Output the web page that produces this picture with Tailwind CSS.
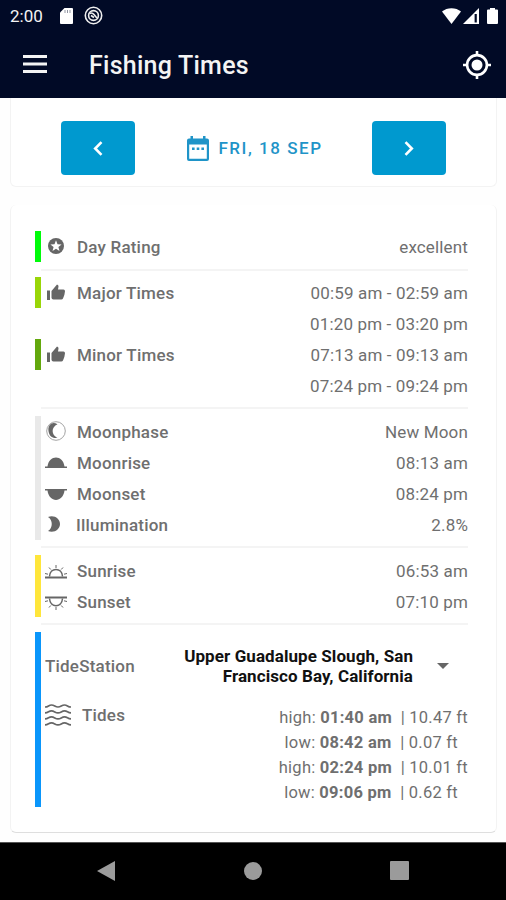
<!DOCTYPE html>
<html lang="en">
<head>
    <meta charset="UTF-8">
    <meta name="viewport" content="width=device-width, initial-scale=1.0">
    <title>Fishing Times</title>
    <script src="https://cdn.jsdelivr.net/npm/@tailwindcss/browser@4"></script>
</head>
<body class="bg-[#fefefe] font-[Roboto,sans-serif] text-[#6f6f6f]">
    <div class="w-[506px] h-[900px] flex flex-col overflow-hidden">
        <!-- Status bar + app bar -->
        <header class="h-[98px] shrink-0 bg-[#010a26] text-[#f4f4f4]">
            <div class="h-8 flex items-center pl-[10px] pr-[8px]">
                <span class="text-[17px] w-[50px] pt-px">2:00</span>
                <svg class="w-[13px] h-4" viewBox="0 0 13 16" fill="#fff"><path d="M4.5 0H12q1 0 1 1v14q0 1-1 1H1q-1 0-1-1V4.500z"/><path d="M5 2v3M7.500 2v3M10 2v3" stroke="#9296a3"/></svg>
                <svg class="w-[19px] h-[19px] ml-[11px] -mt-px" viewBox="0 0 19 19" fill="none" stroke="#eee"><circle cx="9.500" cy="9.500" r="8.200" stroke-width="1.600"/><circle cx="9.500" cy="9.500" r="4.900" stroke-width="1.600"/><path d="M5.500 7.500c3-1.500 4 .5 7.500 4.500M7 9.500l3 2" stroke-width="1.600"/></svg>
                <svg class="w-[19px] h-4 ml-auto -mt-px" viewBox="0 0 19 16" fill="#fff"><path d="M0 3.500C5-1 14-1 19 3.500L9.500 16z"/></svg>
                <svg class="w-4 h-4 ml-[2px] -mt-px" viewBox="0 0 16 16"><path d="M16 0v16H0z" fill="#fff"/><path d="M12.700 6v8.500" stroke="#010a26" stroke-width="2.200"/></svg>
                <svg class="w-[11px] h-4 ml-2 -mt-px" viewBox="0 0 11 16" fill="#fff"><path d="M3 0h5v1.500h2q1 0 1 1V15q0 1-1 1H1q-1 0-1-1V2.500q0-1 1-1h2z"/></svg>
            </div>
            <div class="h-[66px] flex items-center pl-[23px] pr-[15px]">
                <svg class="w-6 h-[18px] -mt-[2px]" viewBox="0 0 24 18" fill="#f4f4f4"><path d="M0 0h24v3H0zM0 7.500h24v3H0zM0 15h24v3H0z"/></svg>
                <h1 class="ml-[42px] pt-[2px] text-[25px] font-medium tracking-[0.25px]">Fishing Times</h1>
                <svg class="w-7 h-7 ml-auto -mt-px" viewBox="0 0 28 28" fill="none" stroke="#fff"><circle cx="14" cy="14" r="9.900" stroke-width="2.600"/><circle cx="14" cy="14" r="5.500" fill="#fff" stroke="none"/><path d="M14 0v4M14 24v4M0 14h4M24 14h4" stroke-width="2.600"/></svg>
            </div>
        </header>

        <main class="flex-1 px-[10px]">
            <!-- Date picker -->
            <section class="h-[89px] w-[487px] flex items-start justify-between pt-[23px] px-[50px] bg-white border border-t-0 border-[#f3f3f3] rounded-b-md">
                <button class="w-[74px] h-[54px] flex items-center justify-center bg-[#0099cf] rounded">
                    <svg class="w-[10px] h-[15px]" viewBox="0 0 10 15" fill="none" stroke="#fff" stroke-width="2.600"><path d="M8.500 1.200L2.200 7.500l6.300 6.300"/></svg>
                </button>
                <div class="flex items-center h-[54px] pl-[3px] text-[#1f94c8]">
                    <svg class="w-[22px] h-[25px]" viewBox="0 0 22 25" fill="currentColor"><path fill-rule="evenodd" d="M3.500 0H6v2.500h10V0h2.500v2.500H20q2 0 2 2V23q0 2-2 2H2q-2 0-2-2V4.500q0-2 2-2h1.500zM2.200 8.500v14.300h17.600V8.500z"/><path d="M5 11.500h2.600v2.500H5zM9.700 11.500h2.600v2.500H9.700zM14.400 11.500H17v2.500h-2.600z"/></svg>
                    <span class="ml-[9px] pt-[2px] text-[17px] font-medium tracking-[1.55px]">FRI, 18 SEP</span>
                </div>
                <button class="w-[74px] h-[54px] flex items-center justify-center bg-[#0099cf] rounded">
                    <svg class="w-[10px] h-[15px]" viewBox="0 0 10 15" fill="none" stroke="#fff" stroke-width="2.600"><path d="M1.500 1.200l6.300 6.300-6.300 6.300"/></svg>
                </button>
            </section>

            <!-- Details -->
            <section class="mt-[18px] h-[628px] w-[487px] pt-[26px] pl-[24px] pr-[28px] bg-white border border-t-0 border-x-[#f3f3f3] border-b-[#dedede] rounded-md text-[17px] leading-[33px] tracking-[0.15px]">
                <div class="flex h-[31px]">
                    <span class="w-[6px] bg-[#00fb0a]"></span>
                    <span class="w-[36px] flex items-center pl-[7px]"><svg class="w-4 h-4 -mt-px" viewBox="0 0 16 16"><circle cx="8" cy="8" r="8" fill="#666"/><path d="M8 2.300l1.500 3.900 4.100.2-3.200 2.600 1.100 4L8 10.700 4.500 13l1.100-4-3.200-2.600 4.100-.2z" fill="#fff"/></svg></span>
                    <span class="font-medium tracking-[0.2px]">Day Rating</span>
                    <span class="ml-auto">excellent</span>
                </div>
                <hr class="mt-[7px] mb-[6px] ml-[6px] border-0 h-[2px] bg-[#f4f4f4]">

                <div class="flex h-[31px]">
                    <span class="w-[6px] bg-[#99d608]"></span>
                    <span class="w-[36px] flex items-center pl-[6px]"><svg class="w-[18px] h-4 -mt-[2px]" viewBox="0 0 18 16" fill="#666"><path d="M0 6.500h3V16H0zM4.500 7L10 0.500q1.700.3 1.500 2L11 5.500h5.500q1.500 0 1.500 1.700-.3 3.800-2 7.300-.5 1-1.700 1H6.500q-2 0-2-1.700z"/></svg></span>
                    <span class="font-medium tracking-[0.2px]">Major Times</span>
                    <span class="ml-auto">00:59 am - 02:59 am</span>
                </div>
                <div class="h-[31px] text-right">01:20 pm - 03:20 pm</div>
                <div class="flex h-[31px]">
                    <span class="w-[6px] bg-[#63a80d]"></span>
                    <span class="w-[36px] flex items-center pl-[6px]"><svg class="w-[18px] h-4 -mt-[2px]" viewBox="0 0 18 16" fill="#666"><path d="M0 6.500h3V16H0zM4.500 7L10 0.500q1.700.3 1.500 2L11 5.500h5.500q1.500 0 1.500 1.700-.3 3.800-2 7.300-.5 1-1.700 1H6.500q-2 0-2-1.700z"/></svg></span>
                    <span class="font-medium tracking-[0.2px]">Minor Times</span>
                    <span class="ml-auto">07:13 am - 09:13 am</span>
                </div>
                <div class="h-[31px] text-right">07:24 pm - 09:24 pm</div>
                <hr class="mt-[6px] mb-[7px] ml-[6px] border-0 h-[2px] bg-[#f4f4f4]">

                <!-- Moon -->
                <div class="flex">
                    <span class="w-[6px] bg-[#e9e9e9]"></span>
                    <div class="flex-1">
                        <div class="flex h-[31px]">
                            <span class="w-[36px] flex items-center pl-[5px]"><svg class="w-[20px] h-[20px] -mt-px" viewBox="0 0 20 20"><circle cx="10" cy="10" r="9.300" fill="#fff" stroke="#999" stroke-width=".9"/><path d="M11.500 3.200C5-.5 1 5.500 2.800 11.500c1 4.500 5 6 8.700 5.300C5 14 5 6 11.500 3.200z" fill="#666"/></svg></span>
                            <span class="font-medium tracking-[0.2px]">Moonphase</span>
                            <span class="ml-auto">New Moon</span>
                        </div>
                        <div class="flex h-[31px]">
                            <span class="w-[36px] flex items-center pl-[4px]"><svg class="w-[22px] h-[11px]" viewBox="0 0 22 11" fill="#666"><path d="M0 9.500h2.500C4-2.500 18-2.500 19.500 9.500H22V11H0z"/></svg></span>
                            <span class="font-medium tracking-[0.2px]">Moonrise</span>
                            <span class="ml-auto">08:13 am</span>
                        </div>
                        <div class="flex h-[31px]">
                            <span class="w-[36px] flex items-center pl-[4px] pt-[2px]"><svg class="w-[22px] h-[11px]" viewBox="0 0 22 11" fill="#666"><path d="M0 0h22v1.500h-2.500C18 14 4 14 2.500 1.500H0z"/></svg></span>
                            <span class="font-medium tracking-[0.2px]">Moonset</span>
                            <span class="ml-auto">08:24 pm</span>
                        </div>
                        <div class="flex h-[31px]">
                            <span class="w-[35px] flex items-center pl-[7px]"><svg class="w-[12px] h-[16px] -mt-px" viewBox="0 0 12 16" fill="#666"><path d="M0 1C6-1.500 12 2.500 12 8S6 17.500 0 15C5 12 5 4 0 1z"/></svg></span>
                            <span class="font-medium tracking-[0.2px]">Illumination</span>
                            <span class="ml-auto">2.8%</span>
                        </div>
                    </div>
                </div>
                <hr class="mt-[6px] mb-[7px] ml-[6px] border-0 h-[2px] bg-[#f4f4f4]">

                <!-- Sun -->
                <div class="flex">
                    <span class="w-[6px] bg-[#ffe63b]"></span>
                    <div class="flex-1">
                        <div class="flex h-[31px]">
                            <span class="w-[36px] flex items-center pl-[4px] pt-[2px]"><svg class="w-[22px] h-[14px]" viewBox="0 0 22 14" fill="none" stroke="#666"><path d="M0 12.500h22" stroke-width="2"/><path d="M4.500 11.500C5 2 17 2 17.500 11.500" stroke-width="1.500"/><path d="M11 0v3M4 2.500l1.800 2M18 2.500l-1.800 2M0 8.500l3 .7M22 8.500l-3 .7"/></svg></span>
                            <span class="font-medium tracking-[0.2px]">Sunrise</span>
                            <span class="ml-auto">06:53 am</span>
                        </div>
                        <div class="flex h-[31px]">
                            <span class="w-[36px] flex items-center pl-[4px] pt-[3px]"><svg class="w-[22px] h-[14px]" viewBox="0 0 22 14" fill="none" stroke="#666"><path d="M0 1.500h22" stroke-width="2"/><path d="M4.500 2.500C5 12 17 12 17.500 2.500" stroke-width="1.500"/><path d="M11 14v-3M4 11.500l1.800-2M18 11.500l-1.800-2M0 5.500l3-.7M22 5.500l-3-.7"/></svg></span>
                            <span class="font-medium tracking-[0.2px]">Sunset</span>
                            <span class="ml-auto">07:10 pm</span>
                        </div>
                    </div>
                </div>
                <hr class="mt-[6px] mb-[7px] ml-[6px] border-0 h-[2px] bg-[#f4f4f4]">

                <!-- Tides -->
                <div class="flex h-[175px] leading-[31px]">
                    <span class="w-[6px] bg-[#0a96fb]"></span>
                    <div class="flex-1 pl-[4px]">
                        <div class="flex items-center h-[68px]">
                            <span class="font-medium tracking-[0.2px]">TideStation</span>
                            <p class="ml-auto w-[240px] pb-px text-right text-[17px] leading-5 font-bold text-[#111] tracking-[0.08px]">Upper Guadalupe Slough, San<br>Francisco Bay, California</p>
                            <svg class="w-3 h-[6px] ml-6 mr-[19px]" viewBox="0 0 12 6" fill="#666"><path d="M0 0h12L6 6z"/></svg>
                        </div>
                        <div class="flex">
                            <svg class="w-[26px] h-[22px] mt-[4px]" viewBox="0 0 26 22" fill="none" stroke="#666" stroke-width="1.700"><path d="M0 3C3.500 3 3.500 1 6.500 1S10 3 13 3s3.500-2 6.500-2S22.500 3 26 3M0 8.900c3.500 0 3.500-2 6.500-2s3.500 2 6.500 2 3.500-2 6.500-2 3 2 6.500 2M0 14.900c3.500 0 3.500-2 6.500-2s3.500 2 6.500 2 3.500-2 6.500-2 3 2 6.500 2M0 20.900c3.500 0 3.500-2 6.500-2s3.500 2 6.500 2 3.500-2 6.500-2 3 2 6.500 2"/></svg>
                            <span class="ml-[11px] font-medium tracking-[0.2px]">Tides</span>
                            <div class="ml-auto pt-[5px] leading-[25px] text-[16.500px] tracking-[0.25px] flex flex-col items-end">
                                <div>high: <b class="font-bold">01:40 am</b> &nbsp;| 10.47 ft</div>
                                <div class="mr-[10px]">low: <b class="font-bold">08:42 am</b> &nbsp;| 0.07 ft</div>
                                <div>high: <b class="font-bold">02:24 pm</b> &nbsp;| 10.01 ft</div>
                                <div class="mr-[10px]">low: <b class="font-bold">09:06 pm</b> &nbsp;| 0.62 ft</div>
                            </div>
                        </div>
                    </div>
                </div>
            </section>
        </main>

        <!-- System navigation -->
        <nav class="h-[58px] shrink-0 flex items-center justify-between px-[97px] pb-[2px] bg-black border-t border-[#555]">
            <svg class="w-[18px] h-5" viewBox="0 0 18 20" fill="#9b9b9b"><path d="M18 0v20L0 10z"/></svg>
            <span class="w-[18px] h-[18px] rounded-full bg-[#9b9b9b]"></span>
            <span class="w-[19px] h-[19px] rounded-[1px] bg-[#9b9b9b]"></span>
        </nav>
    </div>
</body>
</html>
